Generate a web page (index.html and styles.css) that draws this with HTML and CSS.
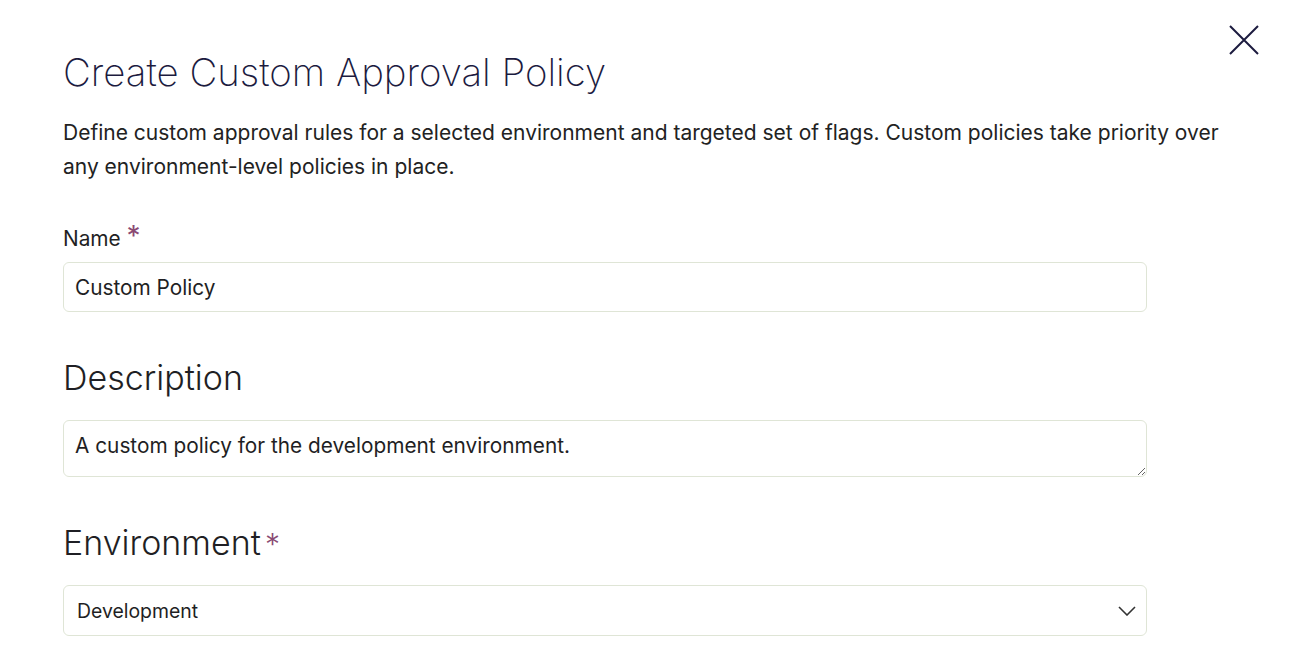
FILE: index.html
```html
<!DOCTYPE html>
<html lang="en">
  <head>
    <meta charset="UTF-8" />
    <meta name="viewport" content="width=device-width, initial-scale=1.0" />
    <title>Create Custom Approval Policy</title>
    <link rel="stylesheet" href="styles.css">
  </head>
  <body>
    <div class="modal">
      <button class="close" aria-label="Close">
        <svg width="32" height="32" viewBox="0 0 32 32">
          <path d="M2 2 L30 30 M30 2 L2 30" stroke="#1c1b3f" stroke-width="2" fill="none" />
        </svg>
      </button>
      <h1>Create Custom Approval Policy</h1>
      <p class="intro">
        Define custom approval rules for a selected environment and targeted set of flags. Custom policies take priority over
        any environment-level policies in place.
      </p>

      <label class="label" for="name">Name <span class="req">*</span></label>
      <input id="name" class="field" type="text" value="Custom Policy" />

      <h2 class="section">Description</h2>
      <textarea class="field area">A custom policy for the development environment.</textarea>

      <h2 class="section">Environment<span class="req big">*</span></h2>
      <div class="field select">
        <span>Development</span>
        <svg width="18" height="10" viewBox="0 0 18 10">
          <path d="M1 1 L9 9 L17 1" stroke="#333" stroke-width="1.6" fill="none" />
        </svg>
      </div>
    </div>
  </body>
</html>
```

FILE: styles.css
```css
body {
  margin: 0;
  background: #fff;
  font-family: Inter, "Noto Sans", sans-serif;
  color: #1f1f24;
}
.modal {
  position: relative;
  padding: 44px 80px 0 63px;
}
.close {
  position: absolute;
  top: 24px;
  right: 52px;
  padding: 0;
  border: 0;
  background: none;
  cursor: pointer;
}
h1 {
  margin: 0;
  font-size: 38.4px;
  font-weight: 200;
  line-height: 56px;
  color: #1c1b3f;
}
.intro {
  margin: 16px 0 0;
  font-size: 21px;
  line-height: 34px;
  color: #222;
}
.label {
  display: block;
  margin-top: 42px;
  font-size: 20.8px;
  line-height: 26px;
}
.req {
  color: #8a4a73;
  font-size: 28px;
  line-height: 20px;
  vertical-align: top;
}
.req.big {
  font-size: 30px;
  line-height: 1;
  vertical-align: baseline;
  margin-left: 4px;
}
.field {
  display: block;
  box-sizing: border-box;
  width: 100%;
  max-width: 1084px;
  height: 50px;
  margin-top: 10px;
  padding: 0 11px;
  border: 1px solid #dfe5d6;
  border-radius: 6px;
  font-family: inherit;
  font-size: 20.8px;
  color: #1f1f24;
}
.area {
  height: 57px;
  margin-top: 20px;
  padding: 13px 11px;
  line-height: 24px;
  resize: vertical;
}
.section {
  margin: 44px 0 0;
  font-size: 34px;
  font-weight: 300;
  line-height: 44px;
}
.select {
  display: flex;
  align-items: center;
  justify-content: space-between;
  height: 51px;
  margin-top: 20px;
  padding: 0 10px 0 13px;
  font-size: 19.4px;
}
```
